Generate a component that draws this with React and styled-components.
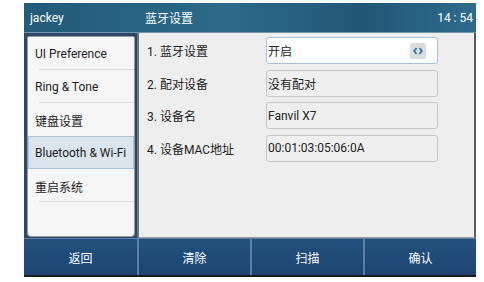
import React from "react";
import styled, { createGlobalStyle } from "styled-components";

const Global = createGlobalStyle`
  body {
    margin: 0;
    background: #ffffff;
    font-family: Roboto, "Noto Sans CJK SC", sans-serif;
  }
`;

const Screen = styled.div`
  margin: 3px 0 0 24px;
  width: 452px;
  height: 272px;
  display: flex;
  flex-direction: column;
  background: #1d3f66;
  border-bottom: 2px solid #1a1a1a;
`;

const Header = styled.div`
  height: 29px;
  display: grid;
  grid-template-columns: 113px 1fr auto;
  align-items: center;
  color: #fff;
  font-size: 12px;
  background: linear-gradient(90deg, #225a79 0%, #2b6a8a 45%, #215676 75%, #2c6c8d 100%);
  border-bottom: 1px solid #6f94ad;
`;

const HeadCell = styled.div`
  padding-left: ${(p) => p.$pad}px;
  padding-right: ${(p) => p.$right || 0}px;
`;

const Body = styled.div`
  height: 205px;
  display: grid;
  grid-template-columns: 113px 1fr;
  background: #51657a;
`;

const Side = styled.div`
  padding: 3px 2px 1px 3px;
  background: #2c4a68;
`;

const SideList = styled.div`
  height: 100%;
  box-sizing: border-box;
  background: #f6f6f6;
  border: 1px solid #9a9a9a;
  border-radius: 2px 2px 4px 4px;
  display: flex;
  flex-direction: column;
`;

const SideItem = styled.div`
  height: 33px;
  box-sizing: border-box;
  display: flex;
  align-items: center;
  padding-left: ${(p) => (p.$active ? 6 : 7)}px;
  padding-top: 1px;
  font-size: 12px;
  color: #222;
  position: relative;
  background: ${(p) => (p.$active ? "#dbe5ee" : "transparent")};
  border: ${(p) => (p.$active ? "1px solid #a8c3da" : "none")};
  &::after {
    content: "";
    display: ${(p) => (p.$active || p.$noLine ? "none" : "block")};
    position: absolute;
    left: 11px;
    right: 0;
    bottom: 0;
    height: 1px;
    background: #d8d8d8;
  }
`;

const Main = styled.div`
  background: #eeeeee;
  border-left: 2px solid #6a7480;
  border-right: 2px solid #5a5a5a;
  border-bottom: 1px solid #9c9c9c;
  padding: 4px 0 0 8px;
  display: flex;
  flex-direction: column;
  gap: 5.5px;
`;

const Row = styled.div`
  display: grid;
  grid-template-columns: 119px 172px;
  align-items: center;
  height: 27px;
  font-size: 12px;
  color: #222;
`;

const Field = styled.div`
  height: 27px;
  box-sizing: border-box;
  border-radius: 3px;
  border: 1px solid ${(p) => (p.$focus ? "#a7c0e2" : "#c6c6c6")};
  background: ${(p) => (p.$focus ? "#ffffff" : "#efefef")};
  display: flex;
  align-items: center;
  justify-content: space-between;
  padding: 0 11px 0 1px;
  font-size: 12px;
  color: #222;
`;

const Spin = styled.div`
  width: 16px;
  height: 16px;
  border-radius: 2px;
  background: #dcdcdc;
  display: flex;
  align-items: center;
  justify-content: center;
`;

const Footer = styled.div`
  flex: 1;
  display: grid;
  grid-template-columns: repeat(4, 1fr);
  background: linear-gradient(180deg, #22507e 0%, #1d4573 100%);
  border-top: 1px solid #5a82aa;
`;

const Btn = styled.div`
  display: flex;
  align-items: center;
  justify-content: center;
  color: #fff;
  font-size: 12px;
  border-left: ${(p) => (p.$first ? "none" : "2px solid #5a7ea6")};
`;

const menu = ["UI Preference", "Ring & Tone", "键盘设置", "Bluetooth & Wi-Fi", "重启系统"];
const rows = [
  ["1. 蓝牙设置", "开启", true],
  ["2. 配对设备", "没有配对"],
  ["3. 设备名", "Fanvil X7"],
  ["4. 设备MAC地址", "00:01:03:05:06:0A"],
];
const buttons = ["返回", "清除", "扫描", "确认"];

export default function App() {
  return (
    <>
      <Global />
      <Screen>
        <Header>
          <HeadCell $pad={6}>jackey</HeadCell>
          <HeadCell $pad={8}>蓝牙设置</HeadCell>
          <HeadCell $pad={0} $right={3}>14 : 54</HeadCell>
        </Header>
        <Body>
          <Side>
            <SideList>
              {menu.map((m, i) => (
                <SideItem key={m} $active={i === 3} $noLine={i === 2}>
                  {m}
                </SideItem>
              ))}
            </SideList>
          </Side>
          <Main>
            {rows.map(([label, value, focus]) => (
              <Row key={label}>
                <span>{label}</span>
                <Field $focus={focus}>
                  <span>{value}</span>
                  {focus && (
                    <Spin>
                      <svg width="10" height="8" viewBox="0 0 10 8">
                        <path d="M3.5 1 L1.2 4 L3.5 7 M6.5 1 L8.8 4 L6.5 7" stroke="#2a74b6" strokeWidth="1.8" fill="none" />
                      </svg>
                    </Spin>
                  )}
                </Field>
              </Row>
            ))}
          </Main>
        </Body>
        <Footer>
          {buttons.map((b, i) => (
            <Btn key={b} $first={i === 0}>{b}</Btn>
          ))}
        </Footer>
      </Screen>
    </>
  );
}
